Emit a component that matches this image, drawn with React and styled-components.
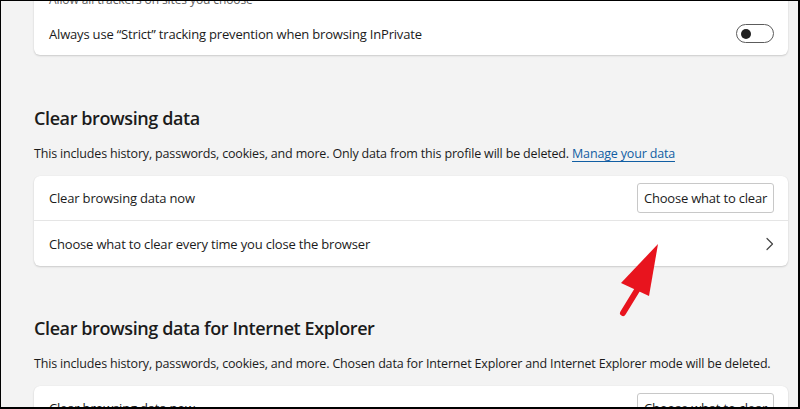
import React from "react";
import styled, { createGlobalStyle } from "styled-components";

const Global = createGlobalStyle`
  html, body { margin: 0; padding: 0; background: #f3f3f3; }
  body { font-family: "Segoe UI", "Open Sans", "Noto Sans", sans-serif; color: #1b1b1b; }
`;

const Frame = styled.div`
  position: relative;
  box-sizing: border-box;
  width: 800px;
  height: 409px;
  overflow: hidden;
  background: #f3f3f3;
  border-style: solid;
  border-color: #000;
  border-width: 1px 2px 2px 1px;
`;

const Page = styled.div`
  display: flex;
  flex-direction: column;
  padding-left: 33px;
  width: 754px;
  margin-top: -23px;
`;

const Card = styled.div`
  background: #fff;
  border-radius: 6px;
  box-shadow: 0 1px 2px rgba(0, 0, 0, 0.16), 0 0 1px rgba(0, 0, 0, 0.08);
  display: flex;
  flex-direction: column;
`;

const Row = styled.div`
  display: flex;
  align-items: center;
  justify-content: space-between;
  height: ${(p) => p.$h || 44}px;
  padding: 0 14px 0 15px;
  border-top: ${(p) => (p.$divider ? "1px solid #e5e5e5" : "none")};
`;

const SubText = styled.div`
  padding: 14px 15px 0;
  margin-bottom: 4px;
  font-size: 12px;
  line-height: 16px;
  color: #616161;
  letter-spacing: -0.1px;
`;

const Label = styled.span`
  font-size: 13px;
  font-weight: 400;
  color: #1b1b1b;
  letter-spacing: -0.18px;
`;

const Toggle = styled.span`
  box-sizing: border-box;
  width: 38px;
  height: 19px;
  border: 1px solid #5c5c5c;
  border-radius: 10px;
  display: flex;
  align-items: center;
  padding-left: 4px;
  &::before {
    content: "";
    width: 10px;
    height: 10px;
    border-radius: 50%;
    background: #1f1f1f;
  }
`;

const Heading = styled.h2`
  margin: ${(p) => p.$mt}px 0 0;
  font-size: 18px;
  line-height: 28px;
  font-weight: 600;
  color: #1b1b1b;
  letter-spacing: -0.4px;
`;

const Desc = styled.p`
  margin: 12px 0 12px;
  font-size: 12.5px;
  line-height: 20px;
  color: #1b1b1b;
  letter-spacing: -0.17px;
  white-space: nowrap;
`;

const Link = styled.a`
  color: #115ea3;
  text-decoration: underline;
  text-underline-offset: 3px;
`;

const Button = styled.button`
  box-sizing: border-box;
  height: 30px;
  width: 137px;
  background: #fff;
  border: 1px solid #c8c8c8;
  border-radius: 3px;
  font-family: inherit;
  font-size: 13px;
  color: #1b1b1b;
  padding: 0;
  letter-spacing: -0.2px;
`;

const Chevron = () => (
  <svg width="10" height="14" viewBox="0 0 10 14" fill="none">
    <path d="M3 1.5l5.5 5.5-5.5 5.5" stroke="#444" strokeWidth="1.2" strokeLinecap="round" strokeLinejoin="round" />
  </svg>
);

const Arrow = styled.svg`
  position: absolute;
  left: 610px;
  top: 236px;
`;

export default function App() {
  return (
    <>
      <Global />
      <Frame>
        <Page>
          <Card>
            <SubText>Allow all trackers on sites you choose</SubText>
            <Row $h={43}>
              <Label>Always use “Strict” tracking prevention when browsing InPrivate</Label>
              <Toggle />
            </Row>
          </Card>

          <Heading $mt={49}>Clear browsing data</Heading>
          <Desc>
            This includes history, passwords, cookies, and more. Only data from this profile will be deleted.{" "}
            <Link href="#">Manage your data</Link>
          </Desc>
          <Card>
            <Row>
              <Label>Clear browsing data now</Label>
              <Button>Choose what to clear</Button>
            </Row>
            <Row $divider $h={45}>
              <Label>Choose what to clear every time you close the browser</Label>
              <Chevron />
            </Row>
          </Card>

          <Heading $mt={48}>Clear browsing data for Internet Explorer</Heading>
          <Desc>
            This includes history, passwords, cookies, and more. Chosen data for Internet Explorer and Internet Explorer mode will be deleted.
          </Desc>
          <Card>
            <Row>
              <Label>Clear browsing data now</Label>
              <Button>Choose what to clear</Button>
            </Row>
          </Card>
        </Page>
        <Arrow width="60" height="90" viewBox="0 0 60 90">
          <line x1="12" y1="76" x2="31" y2="45" stroke="#e8141e" strokeWidth="6" strokeLinecap="round" />
          <polygon points="47,7 10,46 38,59" fill="#e8141e" />
        </Arrow>
      </Frame>
    </>
  );
}
